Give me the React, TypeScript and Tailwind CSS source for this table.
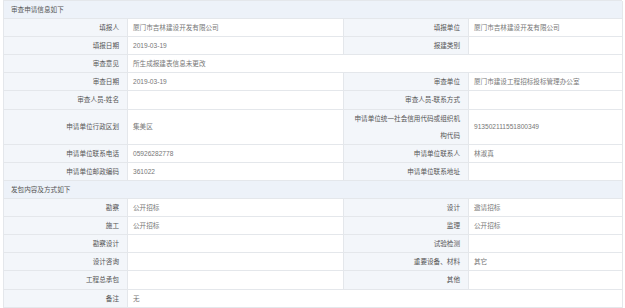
import React from 'react';

type Cell = { label: string; value?: string };

// One form row: left label/value pair, optional right pair, or a wide value.
function FormRow({
  left,
  right,
  wide = false,
  tall = false,
}: {
  left: Cell;
  right?: { label: React.ReactNode; value?: string };
  wide?: boolean;
  tall?: boolean;
}) {
  const h = tall ? 'min-h-[35.2px]' : 'min-h-[18.1px]';
  const label = `${h} flex items-center justify-end border-b border-r border-[#e4e7eb] bg-[#f3f6fa] pr-2 text-right text-[#555]`;
  const value = `${h} flex items-center border-b border-r border-[#e4e7eb] bg-white pl-[5px] text-[#777]`;
  return (
    <>
      <div className={label}>{left.label}</div>
      {wide ? (
        <div className={`${value} col-span-3`}>{left.value}</div>
      ) : (
        <>
          <div className={value}>{left.value}</div>
          <div className={label}>{right?.label}</div>
          <div className={value}>{right?.value}</div>
        </>
      )}
    </>
  );
}

function SectionHeader({ title, top = false }: { title: string; top?: boolean }) {
  return (
    <div
      className={`col-span-4 flex items-center border-b border-r border-[#e4e7eb] bg-[#edf2f9] pl-[7px] text-[#555] ${
        top ? 'min-h-[17.1px]' : 'min-h-[18.1px]'
      }`}
    >
      {title}
    </div>
  );
}

export default function App() {
  return (
    <div className="h-[308px] w-[625px] bg-white px-[3px]">
      <div
        className="grid grid-cols-[124px_216px_125px_154px] border-l border-t border-[#e4e7eb] text-[6.6px] leading-[17.1px]"
        style={{ fontFamily: '"Liberation Sans", "Noto Sans CJK SC", sans-serif' }}
      >
        <SectionHeader title="审查申请信息如下" top />
        <FormRow
          left={{ label: '填报人', value: '厦门市吉林建设开发有限公司' }}
          right={{ label: '填报单位', value: '厦门市吉林建设开发有限公司' }}
        />
        <FormRow left={{ label: '填报日期', value: '2019-03-19' }} right={{ label: '报建类别' }} />
        <FormRow left={{ label: '审查意见', value: '所生成报建表信息未更改' }} wide />
        <FormRow
          left={{ label: '审查日期', value: '2019-03-19' }}
          right={{ label: '审查单位', value: '厦门市建设工程招标投标管理办公室' }}
        />
        <FormRow left={{ label: '审查人员-姓名' }} right={{ label: '审查人员-联系方式' }} />
        <FormRow
          tall
          left={{ label: '申请单位行政区划', value: '集美区' }}
          right={{
            label: (
              <span>
                申请单位统一社会信用代码或组织机
                <br />
                构代码
              </span>
            ),
            value: '913502111551800349',
          }}
        />
        <FormRow
          left={{ label: '申请单位联系电话', value: '05926282778' }}
          right={{ label: '申请单位联系人', value: '林淑真' }}
        />
        <FormRow left={{ label: '申请单位邮政编码', value: '361022' }} right={{ label: '申请单位联系地址' }} />

        <SectionHeader title="发包内容及方式如下" />
        <FormRow left={{ label: '勘察', value: '公开招标' }} right={{ label: '设计', value: '邀请招标' }} />
        <FormRow left={{ label: '施工', value: '公开招标' }} right={{ label: '监理', value: '公开招标' }} />
        <FormRow left={{ label: '勘察设计' }} right={{ label: '试验检测' }} />
        <FormRow left={{ label: '设计咨询' }} right={{ label: '重要设备、材料', value: '其它' }} />
        <FormRow left={{ label: '工程总承包' }} right={{ label: '其他' }} />
        <FormRow left={{ label: '备注', value: '无' }} wide />
      </div>
    </div>
  );
}
